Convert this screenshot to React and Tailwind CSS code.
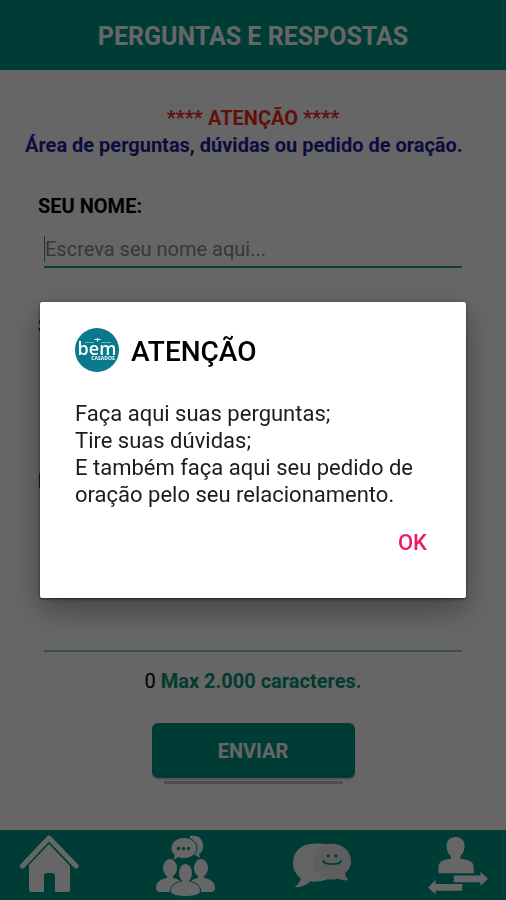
import { useState } from "react";

function HomeIcon() {
  return (
    <svg viewBox="0 0 60 64" className="h-16 w-15" aria-hidden="true">
      <path d="M2.500 32 29 4 56 32" fill="none" stroke="white" strokeWidth="5" strokeLinecap="round" strokeLinejoin="round" />
      <path d="M29 10 50 32V56a2 2 0 0 1-2 2H35V42a3 3 0 0 0-3-3H27a3 3 0 0 0-3 3V58H11a2 2 0 0 1-2-2V31Z" fill="white" />
    </svg>
  );
}

function GroupIcon() {
  return (
    <svg viewBox="0 0 60 64" className="h-16 w-15" aria-hidden="true">
      <g fill="white">
        <path d="M34 2C44 0 48 7 47 14c-.4 3-2 5-4 6l1 4-5-3c-3 1-6 0-8-2Z" />
        <path
          d="M28 3.500c7 0 13 4.500 13 10.500s-6 10.500-13 10.500c-2 0-4-.4-5.500-1L17 26.500l1.500-5.500C16 19.500 15 17 15 14 15 8 21 3.500 28 3.500Z"
          stroke="#009688"
          strokeWidth="1"
        />
        <ellipse cx="14" cy="34" rx="7" ry="9" />
        <ellipse cx="45" cy="34" rx="7" ry="9" />
        <path d="M0 54c0-6 4-8 10-10h8c5 2 8 3 9 6l-7 8H5c-3 0-5-1-5-4Z" />
        <path d="M59 54c0-6-4-8-10-10h-8c-5 2-8 3-9 6l7 8h15c3 0 5-1 5-4Z" />
        <path
          d="M14.500 57c0-6 5-8 10.500-10h9c6 2 10.500 4 10.500 10 0 4-7 5.500-15 5.500s-15-1.500-15-5.500Z"
          stroke="#009688"
          strokeWidth="1"
        />
        <ellipse cx="29.500" cy="39" rx="7" ry="9.500" stroke="#009688" strokeWidth="1" />
        <rect x="26" y="45" width="7" height="5" />
        <rect x="11" y="41" width="6" height="5" />
        <rect x="42" y="41" width="6" height="5" />
      </g>
      <g fill="#009688">
        <circle cx="22.500" cy="14.500" r="1.700" />
        <circle cx="27.500" cy="14.500" r="1.700" />
        <circle cx="32.500" cy="14.500" r="1.700" />
      </g>
    </svg>
  );
}

function ChatIcon() {
  return (
    <svg viewBox="0 0 62 64" className="h-16 w-15" aria-hidden="true">
      <path d="M22 9C9 9 1 18 1 29c0 7 3 12 8 15.500C9 48 6 51 3 54c6 0 12-2 16-6 12 1 24-3 26-10L38 10C33 9 28 8.500 22 9Z" fill="#f8f8f8" />
      <path d="M41 9C29 9 22 17 22 27.500S30 46 41 46c3 0 5-.5 7-1 3 2 7 2.500 10 1-2-2-3-4-3-7 4-3 6-7 6-12C61 16 52 9 41 9Z" fill="#ebebeb" />
      <circle cx="37.500" cy="21.500" r="1.600" fill="#009688" />
      <circle cx="45.500" cy="21.500" r="1.600" fill="#009688" />
      <path d="M32.500 26.500c0 1.500 1 2.300 2 2.500 4 1.200 10 1.200 14 0 1-.3 2-1 2-2.500" fill="none" stroke="#009688" strokeWidth="1.800" strokeLinecap="round" />
    </svg>
  );
}

function TransferIcon() {
  return (
    <svg viewBox="0 0 63 64" className="h-16 w-15" aria-hidden="true">
      <g fill="white">
        <path d="M29 1.500c6 0 9.500 4 9.500 9 0 5-2 9-4.500 11v3c9 1 14 3 14 9v6H11v-6c0-6 5-8 13-9v-3c-3-2-4.500-6-4.500-11 0-5 3.500-9 9.500-9Z" />
        <path d="M27 42H55V38L63 45.500 55 53V49H27Z" />
        <path d="M36 51H8V46.500L0 54.500 8 62V58H36Z" />
      </g>
    </svg>
  );
}

function Logo() {
  return (
    <svg viewBox="0 0 44 44" className="size-11 shrink-0" role="img" aria-label="Bem Casados">
      <circle cx="22" cy="22" r="22" fill="#087a8b" />
      <path d="M19.500 11.500h6M22.500 10v3.500" stroke="white" strokeWidth="1.200" fill="none" />
      <path d="M10 14.500h9M26 14.500h10" stroke="white" strokeWidth=".7" fill="none" opacity=".6" />
      <text x="22" y="27" textAnchor="middle" fill="white" className="font-['Open_Sans',sans-serif] text-[18px] font-semibold">bem</text>
      <text x="28" y="32" textAnchor="middle" fill="white" className="font-['Open_Sans',sans-serif] text-[5px] font-bold">CASADOS</text>
    </svg>
  );
}

const navItems = [
  { label: "Início", Icon: HomeIcon },
  { label: "Grupos", Icon: GroupIcon },
  { label: "Conversas", Icon: ChatIcon },
  { label: "Trocar conta", Icon: TransferIcon },
];

export default function App() {
  const [open, setOpen] = useState(true);
  const [message, setMessage] = useState("");

  return (
    <div className="relative flex min-h-screen flex-col bg-white font-[Roboto,sans-serif] text-black">
      <header className="flex h-[70px] items-center justify-center bg-[#009688] pt-1">
        <h1 className="text-[25px] leading-8 font-bold text-white">PERGUNTAS E RESPOSTAS</h1>
      </header>

      <main className="flex flex-1 flex-col pt-[35px]">
        <div className="px-[25px] text-[20px] leading-[27px] font-bold">
          <p className="text-center text-[#f32a1a]">**** ATENÇÃO ****</p>
          <p className="text-[#1e1e9c]">Área de perguntas, dúvidas ou pedido de oração.</p>
        </div>

        <form className="flex flex-1 flex-col px-[38px] pt-[34px]" onSubmit={(e) => e.preventDefault()}>
          <label htmlFor="nome" className="text-[20px] leading-[27px] font-bold">SEU NOME:</label>
          <div className="mx-1.5 mt-4 border-b-2 border-[#2f9c84] pb-1">
            <input
              id="nome"
              placeholder="Escreva seu nome aqui..."
              className="block h-[26px] w-full border-l border-[#2f9c84] text-[20px] outline-none placeholder:text-[#8c8c8c]"
            />
          </div>

          <label htmlFor="email" className="mt-[45px] text-[20px] leading-[27px] font-bold">SEU EMAIL:</label>
          <input id="email" type="email" className="mx-1.5 mt-4 h-8 border-b border-black text-[20px] outline-none" />

          <label htmlFor="mensagem" className="mt-20 text-[20px] leading-[27px] font-bold">MENSAGEM:</label>
          <textarea
            id="mensagem"
            maxLength={2000}
            value={message}
            onChange={(e) => setMessage(e.target.value)}
            className="mx-1.5 min-h-32 flex-1 resize-none border-b-2 border-[#8cc5b8] text-[20px] outline-none"
          />

          <p className="mt-4 text-center text-[20px] leading-[27px] font-bold text-[#009678]">
            <span className="font-normal text-black">{message.length}</span> Max 2.000 caracteres.
          </p>

          <button
            type="submit"
            className="mt-7 mb-[52px] h-[55px] w-[203px] self-center rounded-md bg-[#009688] text-[20px] font-bold text-white shadow-[0_2px_1px_#d8d8d8,0_3px_0_white,0_18px_0_-12px_#c4c4bc]"
          >
            ENVIAR
          </button>
        </form>
      </main>

      <nav className="flex h-[70px] items-start justify-between bg-[#009688] pt-1 pr-[18px] pl-5">
        {navItems.map(({ label, Icon }) => (
          <button key={label} type="button" aria-label={label}>
            <Icon />
          </button>
        ))}
      </nav>

      {open && (
        <div className="fixed inset-0 flex items-center justify-center bg-black/60 px-10">
          <div
            role="dialog"
            aria-modal="true"
            aria-labelledby="aviso"
            className="w-full max-w-lg rounded-xs bg-white px-[35px] pt-[26px] pb-[38px] shadow-[0_12px_30px_rgba(0,0,0,0.35),0_1px_3px_rgba(0,0,0,0.6)]"
          >
            <div className="flex items-center gap-3">
              <Logo />
              <h2 id="aviso" className="pt-1 text-[28px] leading-9 font-medium">ATENÇÃO</h2>
            </div>
            <p className="mt-7 text-[22px] leading-[27px] text-[#1c1c1c]">
              Faça aqui suas perguntas;
              <br />
              Tire suas dúvidas;
              <br />
              E também faça aqui seu pedido de oração pelo seu relacionamento.
            </p>
            <div className="mt-4 flex justify-end pr-1">
              <button type="button" onClick={() => setOpen(false)} className="h-9 text-[22px] font-medium text-[#f0186c]">
                OK
              </button>
            </div>
          </div>
        </div>
      )}
    </div>
  );
}
